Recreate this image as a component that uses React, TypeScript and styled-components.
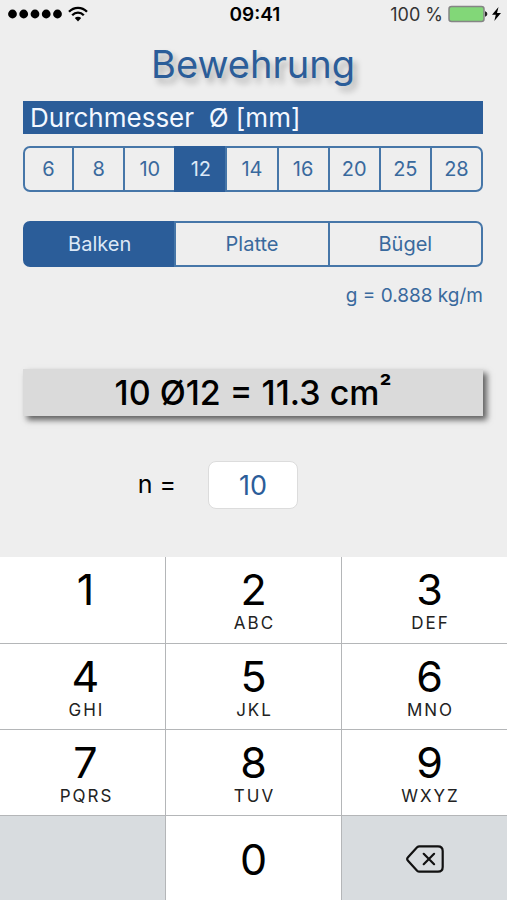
import React, { useState } from "react";
import styled, { createGlobalStyle } from "styled-components";

const blue = "#2b5d99";
const textBlue = "#39699d";
const lineBlue = "#4676a8";

const GlobalStyle = createGlobalStyle`
  *, *::before, *::after { box-sizing: border-box; }
  body {
    margin: 0;
    background: #eeeeee;
    color: #000;
    font-family: Inter, "Liberation Sans", sans-serif;
  }
  button, input { font: inherit; color: inherit; }
`;

const Screen = styled.div`
  display: flex;
  flex-direction: column;
  min-height: 100vh;
`;

const StatusBar = styled.header`
  display: grid;
  grid-template-columns: 1fr auto 1fr;
  align-items: center;
  height: 28px;
  padding: 0 5px 0 8px;
  font-size: 18px;
`;

const StatusGroup = styled.div<{ $end?: boolean }>`
  display: flex;
  align-items: center;
  justify-content: ${(p) => (p.$end ? "flex-end" : "flex-start")};
  gap: 5px;
  color: ${(p) => (p.$end ? "#333" : "#000")};
`;

const Clock = styled.time`
  font-size: 19px;
  font-weight: 600;
`;

const Content = styled.main`
  flex: 1;
  display: flex;
  flex-direction: column;
  padding: 11px 24px 48px 23px;
`;

const Title = styled.h1`
  margin: 0 0 11px;
  font-size: 38px;
  line-height: 51px;
  font-weight: 400;
  text-align: center;
  color: ${blue};
  text-shadow: 4px 5px 6px rgba(0, 0, 0, 0.28);
`;

const SectionTitle = styled.h2`
  margin: 0 0 12px;
  padding: 0 7px;
  font-size: 26px;
  line-height: 33px;
  font-weight: 400;
  white-space: pre;
  color: #f4f8ff;
  background: ${blue};
`;

const Segments = styled.div<{ $gap: number }>`
  display: grid;
  grid-auto-flow: column;
  grid-auto-columns: 1fr;
  height: 46px;
  margin-bottom: ${(p) => p.$gap}px;
`;

const Segment = styled.button<{ $active: boolean }>`
  padding: 0;
  border: 2px solid ${lineBlue};
  font-size: 20px;
  color: ${(p) => (p.$active ? "#dce8f6" : textBlue)};
  background: ${(p) => (p.$active ? blue : "transparent")};
  border-color: ${(p) => (p.$active ? blue : lineBlue)};

  & + & { margin-left: -2px; }
  &:first-child { border-radius: 7px 0 0 7px; }
  &:last-child { border-radius: 0 7px 7px 0; }
`;

const Weight = styled.p`
  margin: 0 0 59px;
  font-size: 19px;
  line-height: 28px;
  text-align: right;
  color: ${textBlue};
`;

const Result = styled.output`
  display: block;
  margin-bottom: 45px;
  font-size: 34px;
  line-height: 47px;
  font-weight: 500;
  text-align: center;
  background: #dadada;
  box-shadow: 4px 4px 6px rgba(0, 0, 0, 0.6);
`;

const Power = styled.span`
  font-size: 26px;
  line-height: 1px;
  font-weight: 700;
  vertical-align: 9px;
`;

const CountRow = styled.div`
  display: grid;
  grid-template-columns: 1fr 90px 1fr;
  align-items: center;
  column-gap: 32px;
`;

const CountLabel = styled.label`
  font-size: 25px;
  line-height: 28px;
  padding-bottom: 2px;
  text-align: right;
`;

const CountInput = styled.input`
  width: 100%;
  height: 48px;
  padding: 0;
  border: 1px solid #dcdcdc;
  border-radius: 8px;
  font-size: 27px;
  text-align: center;
  color: ${blue};
  background: #fff;
  outline: none;
`;

const Keypad = styled.div`
  display: grid;
  grid-template-columns: 165fr 176fr 166fr;
  grid-auto-rows: 86px;
  background: #fff;
`;

const Key = styled.button<{ $muted?: boolean }>`
  display: flex;
  flex-direction: column;
  align-items: center;
  justify-content: center;
  padding: 0;
  border: 0 solid #b4b6b8;
  background: ${(p) => (p.$muted ? "#d8dcdf" : "#fff")};

  &:nth-child(n + 4) { border-top-width: 1px; }
  &:nth-child(3n + 1) { padding-left: 6px; }
  &:nth-child(3n + 2), &:nth-child(3n) { border-left-width: 1px; }
  &:nth-child(3n) { padding-left: ${(p) => (p.$muted ? 0 : 10)}px; }
`;

const Digit = styled.span`
  font-size: 43px;
  line-height: 46px;
`;

const Letters = styled.span`
  height: 22px;
  padding-left: 2px;
  font-size: 17px;
  line-height: 22px;
  letter-spacing: 2px;
  color: #222;
`;

const diameters = [6, 8, 10, 12, 14, 16, 20, 25, 28];
const shapes = ["Balken", "Platte", "Bügel"];
const keys: [string, string][] = [
  ["1", ""], ["2", "ABC"], ["3", "DEF"],
  ["4", "GHI"], ["5", "JKL"], ["6", "MNO"],
  ["7", "PQRS"], ["8", "TUV"], ["9", "WXYZ"],
];

const SignalIcon = () => (
  <svg width="55" height="10" viewBox="0 0 55 10" aria-hidden="true">
    {[4.5, 15.7, 27, 38.2, 49.5].map((x) => (
      <circle key={x} cx={x} cy="5" r="4.4" />
    ))}
  </svg>
);

const WifiIcon = () => (
  <svg width="20" height="16" viewBox="0 0 20 16" fill="none" stroke="#000" strokeWidth="2.3" aria-hidden="true">
    <path d="M1 5.7C6 .5 14 .5 19 5.7" />
    <path d="M4.2 9.2c3.3-3.4 8.3-3.4 11.6 0" />
    <path d="M6.8 12a4.6 4.6 0 0 1 6.4 0L10 15.4Z" fill="#000" stroke="none" />
  </svg>
);

const BatteryIcon = () => (
  <svg width="54" height="18" viewBox="0 0 54 18" aria-hidden="true">
    <rect x="1" y="1.5" width="35" height="15" rx="2.5" fill="#82d778" stroke="#858585" strokeWidth="1.5" />
    <path d="M37.5 6.8c1.8.4 1.8 4 0 4.4Z" stroke="#222" />
    <path d="M50.5 2 44 9.8h3.8L46.3 16l6.7-8h-4Z" />
  </svg>
);

const DeleteIcon = () => (
  <svg width="38" height="28" viewBox="0 0 38 28" fill="none" stroke="#111" strokeWidth="2.2" strokeLinejoin="round" strokeLinecap="round" aria-hidden="true">
    <path d="M13.5 1.3H32c3 0 4.7 1.7 4.7 4.7v16c0 3-1.7 4.7-4.7 4.7H13.5c-1 0-1.7-.3-2.4-1L2 15.8c-1.1-1.2-1.1-2.4 0-3.6l9.1-9.9c.7-.7 1.4-1 2.4-1Z" />
    <path d="m17.7 8.8 10.4 10.4M28.1 8.8 17.7 19.2" />
  </svg>
);

export default function App() {
  const [diameter, setDiameter] = useState(12);
  const [shape, setShape] = useState("Balken");
  const [count, setCount] = useState("10");

  const area = (Number(count) * Math.PI * diameter ** 2) / 400;
  const weight = (Math.PI * diameter ** 2 * 0.00785) / 4;

  return (
    <>
      <GlobalStyle />
      <Screen>
        <StatusBar>
          <StatusGroup>
            <SignalIcon />
            <WifiIcon />
          </StatusGroup>
          <Clock>09:41</Clock>
          <StatusGroup $end>
            <span>100 %</span>
            <BatteryIcon />
          </StatusGroup>
        </StatusBar>
        <Content>
          <Title>Bewehrung</Title>
          <SectionTitle>{"Durchmesser  Ø [mm]"}</SectionTitle>
          <Segments $gap={29} role="group" aria-label="Durchmesser">
            {diameters.map((d) => (
              <Segment key={d} type="button" $active={d === diameter} aria-pressed={d === diameter} onClick={() => setDiameter(d)}>
                {d}
              </Segment>
            ))}
          </Segments>
          <Segments $gap={15} role="group" aria-label="Bauteil">
            {shapes.map((s) => (
              <Segment key={s} type="button" $active={s === shape} aria-pressed={s === shape} onClick={() => setShape(s)}>
                {s}
              </Segment>
            ))}
          </Segments>
          <Weight>g = {weight.toFixed(3)} kg/m</Weight>
          <Result htmlFor="count">
            {count || 0} Ø{diameter} = {area.toFixed(1)} cm<Power>²</Power>
          </Result>
          <CountRow>
            <CountLabel htmlFor="count">n =</CountLabel>
            <CountInput id="count" inputMode="numeric" value={count} onChange={(e) => setCount(e.target.value.replace(/\D/g, ""))} />
          </CountRow>
        </Content>
        <Keypad>
          {keys.map(([digit, letters]) => (
            <Key key={digit} type="button" onClick={() => setCount(count + digit)}>
              <Digit>{digit}</Digit>
              <Letters>{letters}</Letters>
            </Key>
          ))}
          <Key type="button" $muted disabled aria-label="Leer" />
          <Key type="button" onClick={() => setCount(count + "0")}>
            <Digit>0</Digit>
          </Key>
          <Key type="button" $muted aria-label="Löschen" onClick={() => setCount(count.slice(0, -1))}>
            <DeleteIcon />
          </Key>
        </Keypad>
      </Screen>
    </>
  );
}
